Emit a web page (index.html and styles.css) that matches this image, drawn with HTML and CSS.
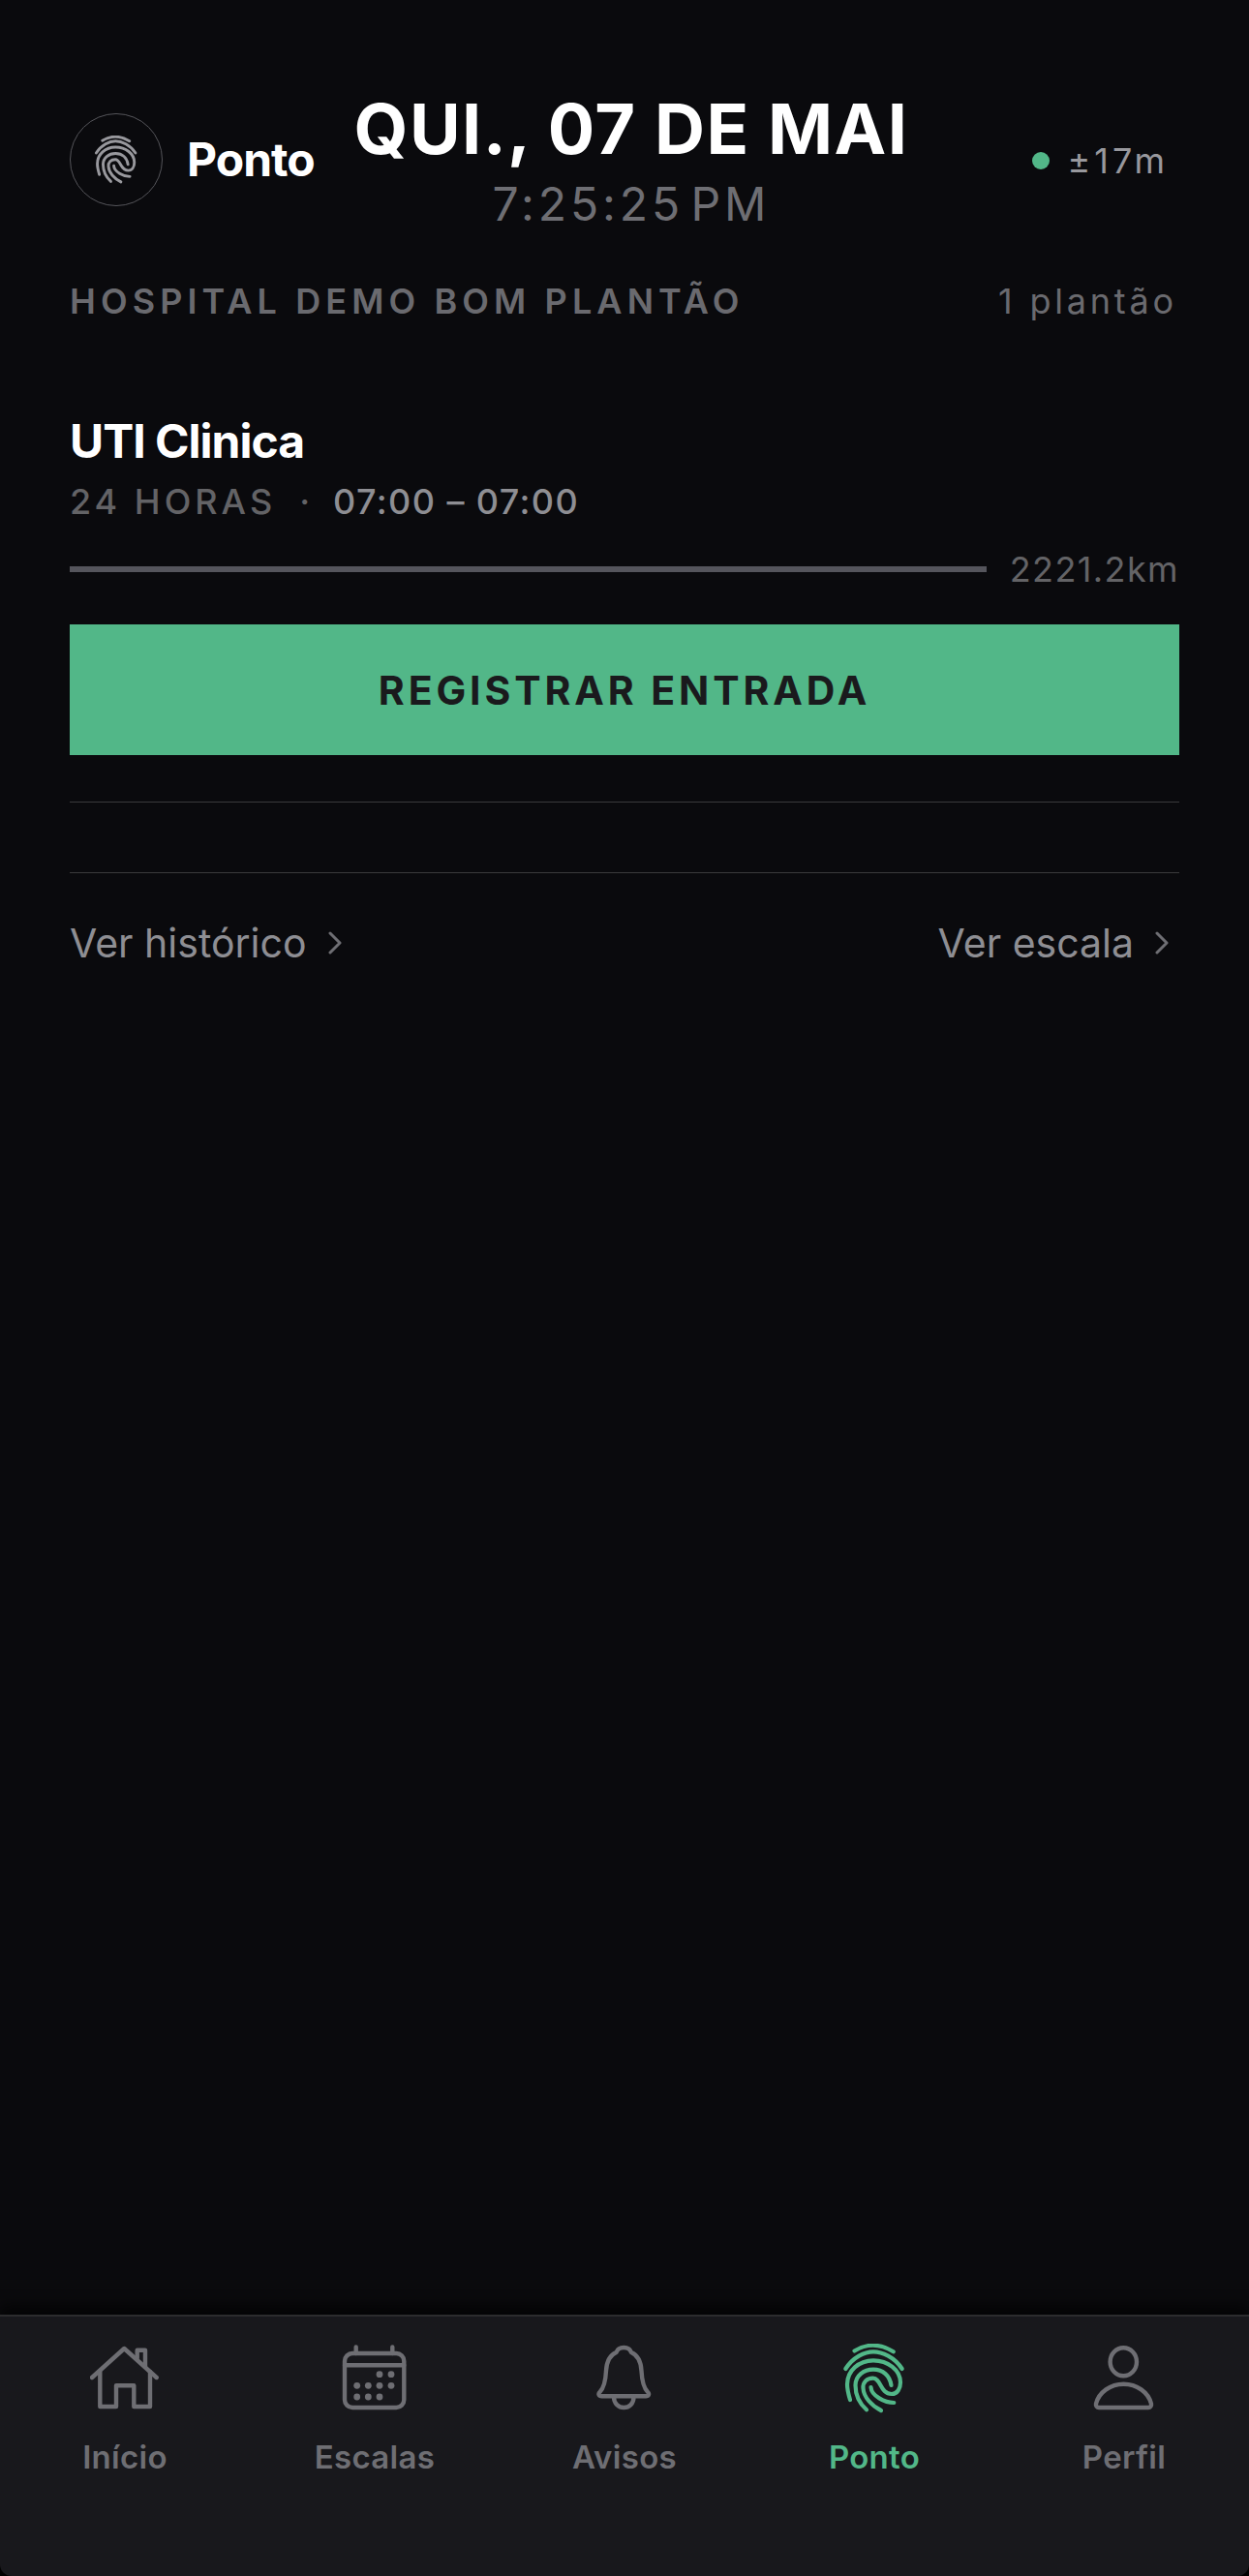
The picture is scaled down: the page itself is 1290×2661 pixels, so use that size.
FILE: index.html
```html
<!DOCTYPE html>
<html lang="pt-BR">
<head>
  <meta charset="UTF-8" />
  <meta name="viewport" content="width=device-width, initial-scale=1.0" />
  <title>Ponto</title>
  <link rel="stylesheet" href="styles.css">
</head>
<body>

  <svg class="defs" width="0" height="0" aria-hidden="true">
    <symbol id="fingerprint" viewBox="0 0 72 72">
      <g fill="none" stroke="currentColor" stroke-width="4.2" stroke-linecap="round" stroke-linejoin="round">
        <path d="M15.5 7.5Q35 -4.4 55.7 8.3" />
        <path d="M6.3 26C14 14 26 8.3 35 8.3S57 14 64.7 26" />
        <path d="M11 58C9.5 53 8 48 8 42C8 28 20 17.3 35 17.3C50 17.3 63 27 63 40C63 46 60 52 54 52C42 52 43 35.7 34.7 35.7C28 35.7 24 40 24.5 46C25 55 33 64 43 69" />
        <path d="M28 68.3C21 62 16.5 53 16.5 43C16.5 33 25 26.7 35 26.7C45 26.7 52 33 53.5 43" />
        <path d="M56.3 61C47 61 33 54 32.5 45" />
      </g>
    </symbol>
  </svg>

  <main class="content">
    <header class="top">
      <div class="brand">
        <span class="brand-icon"><svg width="50" height="50"><use href="#fingerprint" /></svg></span>
        <span class="brand-name">Ponto</span>
      </div>
      <div class="clock">
        <div class="clock-date">QUI., 07 DE MAI</div>
        <div class="clock-time">7:25:25 PM</div>
      </div>
      <div class="gps">
        <span class="gps-dot"></span>
        <span>±17m</span>
      </div>
    </header>

    <div class="section-head">
      <span class="section-title">HOSPITAL DEMO BOM PLANTÃO</span>
      <span class="section-count">1 plantão</span>
    </div>

    <section class="shift">
      <h2 class="shift-name">UTI Clinica</h2>
      <div class="shift-meta">
        <span class="shift-length">24 HORAS</span>
        <span class="shift-sep">·</span>
        <span class="shift-hours">07:00 – 07:00</span>
      </div>
      <div class="distance">
        <div class="distance-bar"></div>
        <span class="distance-value">2221.2km</span>
      </div>
      <button class="register" type="button">REGISTRAR ENTRADA</button>
    </section>

    <div class="rule rule-first"></div>
    <div class="rule rule-second"></div>

    <div class="links">
      <a class="link">Ver histórico
        <svg class="chevron" width="14" height="26" viewBox="0 0 14 26"><path d="M2 3L12 13L2 23" /></svg>
      </a>
      <a class="link">Ver escala
        <svg class="chevron" width="14" height="26" viewBox="0 0 14 26"><path d="M2 3L12 13L2 23" /></svg>
      </a>
    </div>
  </main>

  <nav class="tabs">
    <a class="tab">
      <svg class="tab-icon" width="72" height="72" viewBox="0 0 72 72">
        <path d="M2 35L35.3 5L68.7 35" />
        <path d="M48.7 15V6.7H57V24" />
        <path d="M10.3 29V65H27V43.3H45.3V65H62V29" />
      </svg>
      <span>Início</span>
    </a>
    <a class="tab">
      <svg class="tab-icon" width="72" height="72" viewBox="0 0 72 72">
        <rect x="5" y="10" width="61.3" height="56" rx="8" />
        <path d="M5 22.3H66.3M16.7 3.5V10M54.3 3.5V10" />
        <g class="dots">
          <circle cx="41" cy="31.7" r="3.4" /><circle cx="53" cy="31.7" r="3.4" />
          <circle cx="17.7" cy="43.3" r="3.4" /><circle cx="29.3" cy="43.3" r="3.4" /><circle cx="41" cy="43.3" r="3.4" /><circle cx="53" cy="43.3" r="3.4" />
          <circle cx="17.7" cy="55" r="3.4" /><circle cx="29.3" cy="55" r="3.4" /><circle cx="41" cy="55" r="3.4" />
        </g>
      </svg>
      <span>Escalas</span>
    </a>
    <a class="tab">
      <svg class="tab-icon" width="72" height="72" viewBox="0 0 72 72">
        <path d="M35.3 4C39 4 42 6 43 9C50 12 53 19 53.5 28C54 38 56 46 60 50C62 52 61 54.3 58 54.3H12.5C9.5 54.3 8.5 52 10.5 50C14.5 46 16.5 38 17 28C17.5 19 20.5 12 27.5 9C28.5 6 31.5 4 35.3 4Z" />
        <path d="M25 55C25 62 30 66 35.3 66C41 66 45.5 62 45.5 55" />
      </svg>
      <span>Avisos</span>
    </a>
    <a class="tab active">
      <svg width="72" height="72"><use href="#fingerprint" /></svg>
      <span>Ponto</span>
    </a>
    <a class="tab">
      <svg class="tab-icon" width="72" height="72" viewBox="0 0 72 72">
        <ellipse cx="35.3" cy="18.7" rx="13.7" ry="14.5" />
        <path d="M10 66H61C63 66 64.5 64.5 64 62C61 50 49 41.7 35.5 41.7C22 41.7 10 50 7 62C6.5 64.5 8 66 10 66Z" />
      </svg>
      <span>Perfil</span>
    </a>
  </nav>

</body>
</html>
```

FILE: styles.css
```css
* {
  box-sizing: border-box;
}
body {
  font-family: Inter, "Liberation Sans", sans-serif;
  background: #000;
  color: #fff;
  margin: 0;
  width: 1290px;
  height: 2661px;
  display: flex;
  flex-direction: column;
  overflow: hidden;
}
.defs {
  display: block;
  height: 0;
}
.content {
  flex: 1;
  background: #0a0a0d;
  padding: 91px 72px 0;
}

/* header */
.top {
  display: flex;
  align-items: center;
  padding-right: 11px;
}
.brand {
  display: flex;
  align-items: center;
  gap: 25px;
}
.brand-icon {
  width: 96px;
  height: 96px;
  border-radius: 50%;
  border: 1px solid #55555a;
  color: #98989d;
  display: flex;
  align-items: center;
  justify-content: center;
}
.brand-name {
  font-size: 48px;
  font-weight: 700;
  letter-spacing: -1px;
  margin-bottom: 2px;
}
.clock {
  margin-left: 41px;
  text-align: center;
}
.clock-date {
  font-size: 72px;
  line-height: 84px;
  font-weight: 700;
  letter-spacing: 1.4px;
}
.clock-time {
  font-size: 48px;
  line-height: 56px;
  margin-top: 8px;
  letter-spacing: 3.9px;
  word-spacing: -10px;
  color: #6e6e73;
}
.gps {
  margin-left: auto;
  display: flex;
  align-items: center;
  gap: 18px;
  padding-top: 2px;
  font-size: 36px;
  letter-spacing: 4px;
  color: #98989d;
}
.gps-dot {
  width: 18px;
  height: 18px;
  border-radius: 50%;
  background: #52b788;
}

/* hospital row */
.section-head {
  display: flex;
  justify-content: space-between;
  align-items: baseline;
  margin-top: 50px;
  padding-right: 2px;
  line-height: 44px;
  font-size: 36px;
  color: #6a6a6f;
}
.section-title {
  font-weight: 600;
  letter-spacing: 5.1px;
}
.section-count {
  letter-spacing: 3.8px;
}

/* shift */
.shift {
  margin-top: 95px;
}
.shift-name {
  margin: 0;
  font-size: 48px;
  line-height: 56px;
  font-weight: 700;
  letter-spacing: -1px;
}
.shift-meta {
  display: flex;
  align-items: baseline;
  gap: 24px;
  margin-top: 12px;
  font-size: 36px;
  line-height: 44px;
  font-weight: 500;
}
.shift-length {
  color: #636366;
  letter-spacing: 4px;
}
.shift-sep {
  color: #636366;
}
.shift-hours {
  color: #8e8e93;
  letter-spacing: 1.4px;
}
.distance {
  display: flex;
  align-items: center;
  gap: 24px;
  margin-top: 26px;
}
.distance-bar {
  flex: 1;
  height: 6px;
  background: #55555c;
}
.distance-value {
  font-size: 36px;
  line-height: 44px;
  color: #636366;
  letter-spacing: 1.4px;
}
.register {
  display: block;
  width: 100%;
  height: 135px;
  margin-top: 35px;
  border: none;
  background: #52b788;
  color: #1a1a1d;
  font-family: inherit;
  font-size: 41px;
  font-weight: 700;
  letter-spacing: 3.9px;
}
.rule {
  height: 1px;
  background: #3a3a3c;
}
.rule-first {
  margin-top: 48px;
}
.rule-second {
  margin-top: 72px;
}

/* links */
.links {
  display: flex;
  justify-content: space-between;
  margin-top: 44px;
  padding-right: 11px;
}
.link {
  display: flex;
  align-items: center;
  gap: 22px;
  font-size: 41px;
  line-height: 56px;
  color: #8e8e93;
}
.chevron path {
  fill: none;
  stroke: #6e6e73;
  stroke-width: 3;
  stroke-linecap: round;
  stroke-linejoin: round;
}

/* tab bar */
.tabs {
  height: 270px;
  display: grid;
  grid-template-columns: repeat(5, 258px);
  background: #18181c;
  border-top: 2px solid #2c2c2e;
  border-radius: 0 0 12px 12px;
  box-shadow: 0 -10px 14px rgba(0, 0, 0, 0.6);
  padding-top: 28px;
}
.tab {
  display: flex;
  flex-direction: column;
  align-items: center;
  gap: 25px;
  font-size: 33px;
  line-height: 40px;
  font-weight: 600;
  letter-spacing: 0.3px;
  color: #6e6e73;
}
.tab.active {
  color: #52b788;
}
.tab-icon {
  fill: none;
  stroke: currentColor;
  stroke-width: 4.4;
  stroke-linecap: round;
  stroke-linejoin: round;
}
.tab-icon .dots {
  fill: currentColor;
  stroke: none;
}
```
